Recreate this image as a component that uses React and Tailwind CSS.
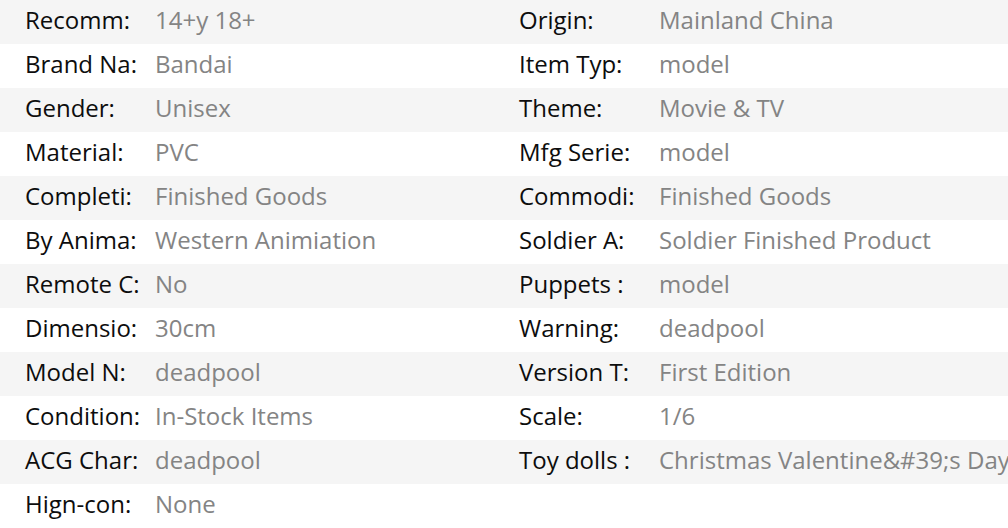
const rows = [
  ['Recomm:', '14+y 18+', 'Origin:', 'Mainland China'],
  ['Brand Na:', 'Bandai', 'Item Typ:', 'model'],
  ['Gender:', 'Unisex', 'Theme:', 'Movie & TV'],
  ['Material:', 'PVC', 'Mfg Serie:', 'model'],
  ['Completi:', 'Finished Goods', 'Commodi:', 'Finished Goods'],
  ['By Anima:', 'Western Animiation', 'Soldier A:', 'Soldier Finished Product'],
  ['Remote C:', 'No', 'Puppets :', 'model'],
  ['Dimensio:', '30cm', 'Warning:', 'deadpool'],
  ['Model N:', 'deadpool', 'Version T:', 'First Edition'],
  ['Condition:', 'In-Stock Items', 'Scale:', '1/6'],
  ['ACG Char:', 'deadpool', 'Toy dolls :', 'Christmas Valentine&#39;s Day'],
  ['Hign-con:', 'None', '', ''],
];

export default function App() {
  return (
    <div
      className="w-[1008px] h-[528px] overflow-hidden bg-white text-[24px]"
      style={{ fontFamily: '"Open Sans", "Noto Sans", sans-serif' }}
    >
      {rows.map(([l1, v1, l2, v2], i) => (
        <div
          key={i}
          className={`grid grid-cols-[155px_339px_165px_349px] h-[44px] leading-[40px] whitespace-nowrap ${
            i % 2 === 0 ? 'bg-[#f5f5f5]' : 'bg-white'
          }`}
        >
          <div className="pl-[25px] text-[#0d0d0d]">{l1}</div>
          <div className="text-[#848484] overflow-hidden">{v1}</div>
          <div className="pl-[25px] text-[#0d0d0d]">{l2}</div>
          <div className="text-[#848484] overflow-hidden">{v2}</div>
        </div>
      ))}
    </div>
  );
}
